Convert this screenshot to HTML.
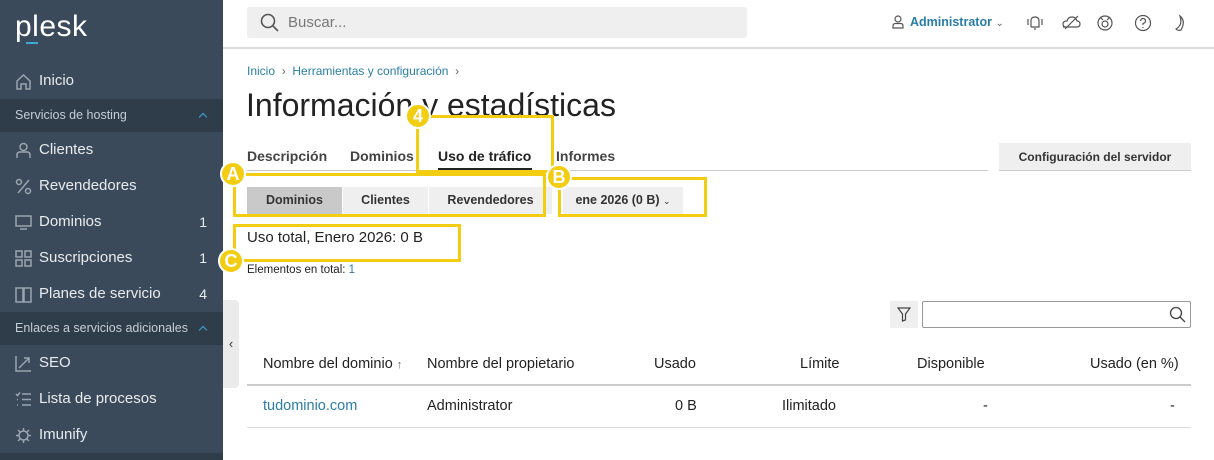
<!DOCTYPE html>
<html><head><meta charset="utf-8"><style>
*{box-sizing:border-box;margin:0;padding:0}
body{width:1214px;height:460px;overflow:hidden;font-family:"Liberation Sans","DejaVu Sans",sans-serif;background:#fff;position:relative;color:#222}
.sb{position:absolute;left:0;top:0;width:223px;height:460px;background:#3b4a5a;color:#e8ecef}
.it{position:absolute;left:0;width:223px;height:36px;font-size:15px;line-height:36px;padding-left:39px}
.it .ic{position:absolute;left:15px;top:10px;width:17px;height:17px;stroke:#9aa5b0;fill:none;stroke-width:1.5}
.it .n{position:absolute;right:16px;top:0;font-size:14px}
.sec{position:absolute;left:0;width:223px;height:33px;background:#2f3c4a;font-size:12.5px;color:#c6ced6;line-height:33px;padding-left:15px}
.sec:after{content:"";position:absolute;right:17px;top:15px;width:5px;height:5px;border-left:1.5px solid #3fa9d6;border-top:1.5px solid #3fa9d6;transform:rotate(45deg)}
.a{position:absolute;white-space:nowrap}
.y{position:absolute;border:3px solid #f2cd12}
.c{position:absolute;width:26px;height:26px;border-radius:50%;background:#f2cd12;border:2px solid #fff;color:#fff;font-weight:bold;font-size:18px;text-align:center;line-height:22px}
.seg{position:absolute;top:187px;height:27px;background:#efefef;font-size:12.5px;text-align:center;line-height:27px;font-weight:bold;color:#333}
.tab{position:absolute;top:148px;font-size:14px;font-weight:bold;color:#444}
</style></head><body>
<div class="sb">
 <div class="a" style="left:15px;top:10px;font-size:30px;color:#fff;letter-spacing:0.5px;font-weight:300">plesk</div>
 <div class="a" style="left:26px;top:42px;width:12px;height:2px;background:#3fa9d6"></div>
 <div class="it" style="top:63px"><svg class="ic" viewBox="0 0 17 17"><path d="M2 8L8.5 2 15 8V16H11V11H6V16H2Z"/></svg>Inicio</div>
 <div class="sec" style="top:99px">Servicios de hosting</div>
 <div class="it" style="top:132px"><svg class="ic" viewBox="0 0 17 17"><circle cx="8.5" cy="5" r="3.5"/><path d="M2 16V13Q2 10 5 10H12Q15 10 15 13V16"/></svg>Clientes</div>
 <div class="it" style="top:168px"><svg class="ic" viewBox="0 0 17 17"><circle cx="4" cy="4" r="2.5"/><circle cx="13" cy="13" r="2.5"/><path d="M14 2L3 15"/></svg>Revendedores</div>
 <div class="it" style="top:204px"><svg class="ic" viewBox="0 0 17 17"><rect x="1" y="2" width="15" height="10"/><path d="M5 15H12"/></svg>Dominios<span class="n">1</span></div>
 <div class="it" style="top:240px"><svg class="ic" viewBox="0 0 17 17"><rect x="1" y="1" width="6" height="6"/><rect x="10" y="1" width="6" height="6"/><rect x="1" y="10" width="6" height="6"/><rect x="10" y="10" width="6" height="6"/></svg>Suscripciones<span class="n">1</span></div>
 <div class="it" style="top:276px"><svg class="ic" viewBox="0 0 17 17"><path d="M1 2H8V16H1ZM9 2H16V16H9Z"/></svg>Planes de servicio<span class="n">4</span></div>
 <div class="sec" style="top:312px">Enlaces a servicios adicionales</div>
 <div class="it" style="top:345px"><svg class="ic" viewBox="0 0 17 17"><path d="M1 1V16H16M4 13L14 3M9 3H14V8"/></svg>SEO</div>
 <div class="it" style="top:381px"><svg class="ic" viewBox="0 0 17 17"><path d="M7 3H16M7 8.5H16M7 14H16M1 3L2.5 4.5 5 1.5M2 8.5H3M2 14H3"/></svg>Lista de procesos</div>
 <div class="it" style="top:417px"><svg class="ic" viewBox="0 0 17 17"><circle cx="8.5" cy="8.5" r="4.5"/><path d="M8.5 1V4M8.5 13V16M1 8.5H4M13 8.5H16M3 3L5 5M12 12L14 14M14 3L12 5M5 12L3 14"/></svg>Imunify</div>
 <div class="a" style="left:0;top:453px;width:223px;height:7px;background:#2f3c4a"></div>
</div>
<div class="a" style="left:223px;top:300px;width:16px;height:88px;background:#ebebeb;border-radius:0 4px 4px 0;font-size:13px;line-height:88px;text-align:center;color:#333">‹</div>
<div class="a" style="left:223px;top:47px;width:991px;height:2px;background:#ddd"></div>
<div class="a" style="left:247px;top:7px;width:500px;height:31px;background:#efefef;border-radius:3px;color:#777;font-size:15px;line-height:31px;padding-left:41px">Buscar...</div>
<svg class="a" style="left:260px;top:13px" width="19" height="19" viewBox="0 0 19 19" fill="none" stroke="#555" stroke-width="1.6"><circle cx="8" cy="8" r="6.5"/><path d="M13 13L18 18"/></svg>
<svg class="a" style="left:892px;top:15px" width="12" height="14" viewBox="0 0 12 14" fill="none" stroke="#555" stroke-width="1.2"><circle cx="6" cy="4" r="3"/><path d="M1 13V11Q1 8.5 3.5 8.5H8.5Q11 8.5 11 11V13Z"/></svg>
<div class="a" style="left:910px;top:15px;font-size:12.5px;font-weight:bold;color:#2a7ea5">Administrator <span style="color:#666;font-weight:normal;font-size:10px">⌄</span></div>
<svg class="a" style="left:1025px;top:13px;" width="190" height="20" viewBox="0 0 190 20" fill="none" stroke="#555" stroke-width="1.2">
 <path d="M6 14V8Q6 4 10 4Q14 4 14 8V14H6M9 16H11M3 6V12M17 6V12"/>
 <path d="M38 14H52Q55 14 55 11Q55 8 52 8Q51 4 47 4Q43 4 42 8Q38 8 38 11Q38 14 41 14M40 16L53 3"/>
 <circle cx="80" cy="10" r="7"/><circle cx="80" cy="11" r="3"/><path d="M75 4L78 7M85 4L82 7"/>
 <circle cx="118" cy="10" r="7.5"/><path d="M115.5 8Q116 5.5 118 5.5Q120.5 5.5 120.5 8Q120.5 10 118 10.5V12M118 14V15"/>
 <path d="M155 3Q161 8 156 17Q153 18 151 16Q158 12 155 3Z"/>
</svg>
<div class="a" style="left:247px;top:64px;font-size:12px;color:#2a7ea5">Inicio <span style="color:#666">&nbsp;›&nbsp;</span> Herramientas y configuración <span style="color:#666">&nbsp;›</span></div>
<div class="a" style="left:246px;top:87px;font-size:32px;color:#222;font-weight:300">Información y estadísticas</div>
<div class="tab" style="left:247px">Descripción</div>
<div class="tab" style="left:350px">Dominios</div>
<div class="tab" style="left:438px;color:#222">Uso de tráfico</div>
<div class="tab" style="left:556px">Informes</div>
<div class="a" style="left:247px;top:170px;width:741px;height:1px;background:#ccc"></div>
<div class="a" style="left:438px;top:168px;width:94px;height:3px;background:#222"></div>
<div class="a" style="left:999px;top:143px;width:192px;height:28px;background:#efefef;border-bottom:1px solid #ccc;font-size:12px;font-weight:bold;text-align:center;line-height:28px;color:#333">Configuración del servidor</div>
<div class="seg" style="left:247px;width:95px;background:#c9c9c9">Dominios</div>
<div class="seg" style="left:343px;width:85px">Clientes</div>
<div class="seg" style="left:429px;width:123px">Revendedores</div>
<div class="seg" style="left:563px;width:120px">ene 2026 (0 B) <span style="font-weight:normal;font-size:9px">⌄</span></div>
<div class="a" style="left:247px;top:229px;font-size:15px;color:#222">Uso total, Enero 2026: 0 B</div>
<div class="a" style="left:247px;top:264px;font-size:11.5px;color:#222">Elementos en total: <span style="color:#2a7ea5">1</span></div>
<div class="a" style="left:890px;top:301px;width:28px;height:27px;background:#efefef;border-radius:2px"></div>
<svg class="a" style="left:897px;top:307px" width="14" height="15" viewBox="0 0 14 15" fill="none" stroke="#444" stroke-width="1.2"><path d="M1 1H13L8.5 7V13L5.5 14V7Z"/></svg>
<div class="a" style="left:922px;top:301px;width:269px;height:27px;border:1px solid #999;border-radius:2px"></div>
<svg class="a" style="left:1169px;top:306px" width="17" height="17" viewBox="0 0 17 17" fill="none" stroke="#444" stroke-width="1.3"><circle cx="7" cy="7" r="5.5"/><path d="M11 11L16 16"/></svg>
<div class="a" style="left:263px;top:356px;font-size:14.5px">Nombre del dominio <span style="font-size:11px;color:#666">↑</span></div>
<div class="a" style="left:427px;top:356px;font-size:14.5px">Nombre del propietario</div>
<div class="a" style="left:654px;top:356px;font-size:14.5px">Usado</div>
<div class="a" style="left:800px;top:356px;font-size:14.5px">Límite</div>
<div class="a" style="left:917px;top:356px;font-size:14.5px">Disponible</div>
<div class="a" style="left:1090px;top:356px;font-size:14.5px">Usado (en %)</div>
<div class="a" style="left:247px;top:384px;width:944px;height:2px;background:#ccc"></div>
<div class="a" style="left:263px;top:398px;font-size:14.5px;color:#2a7ea5">tudominio.com</div>
<div class="a" style="left:427px;top:398px;font-size:14.5px">Administrator</div>
<div class="a" style="left:675px;top:398px;font-size:14.5px">0 B</div>
<div class="a" style="left:782px;top:398px;font-size:14.5px">Ilimitado</div>
<div class="a" style="left:983px;top:398px;font-size:14.5px">-</div>
<div class="a" style="left:1170px;top:398px;font-size:14.5px">-</div>
<div class="a" style="left:247px;top:427px;width:944px;height:1px;background:#ddd"></div>
<div class="y" style="left:416px;top:115px;width:138px;height:58px"></div>
<div class="y" style="left:233px;top:173px;width:313px;height:44px"></div>
<div class="y" style="left:558px;top:177px;width:149px;height:40px"></div>
<div class="y" style="left:233px;top:224px;width:228px;height:38px"></div>
<div class="c" style="left:405px;top:103px">4</div>
<div class="c" style="left:220px;top:161px">A</div>
<div class="c" style="left:546px;top:164px">B</div>
<div class="c" style="left:218px;top:248px">C</div>
</body></html>
